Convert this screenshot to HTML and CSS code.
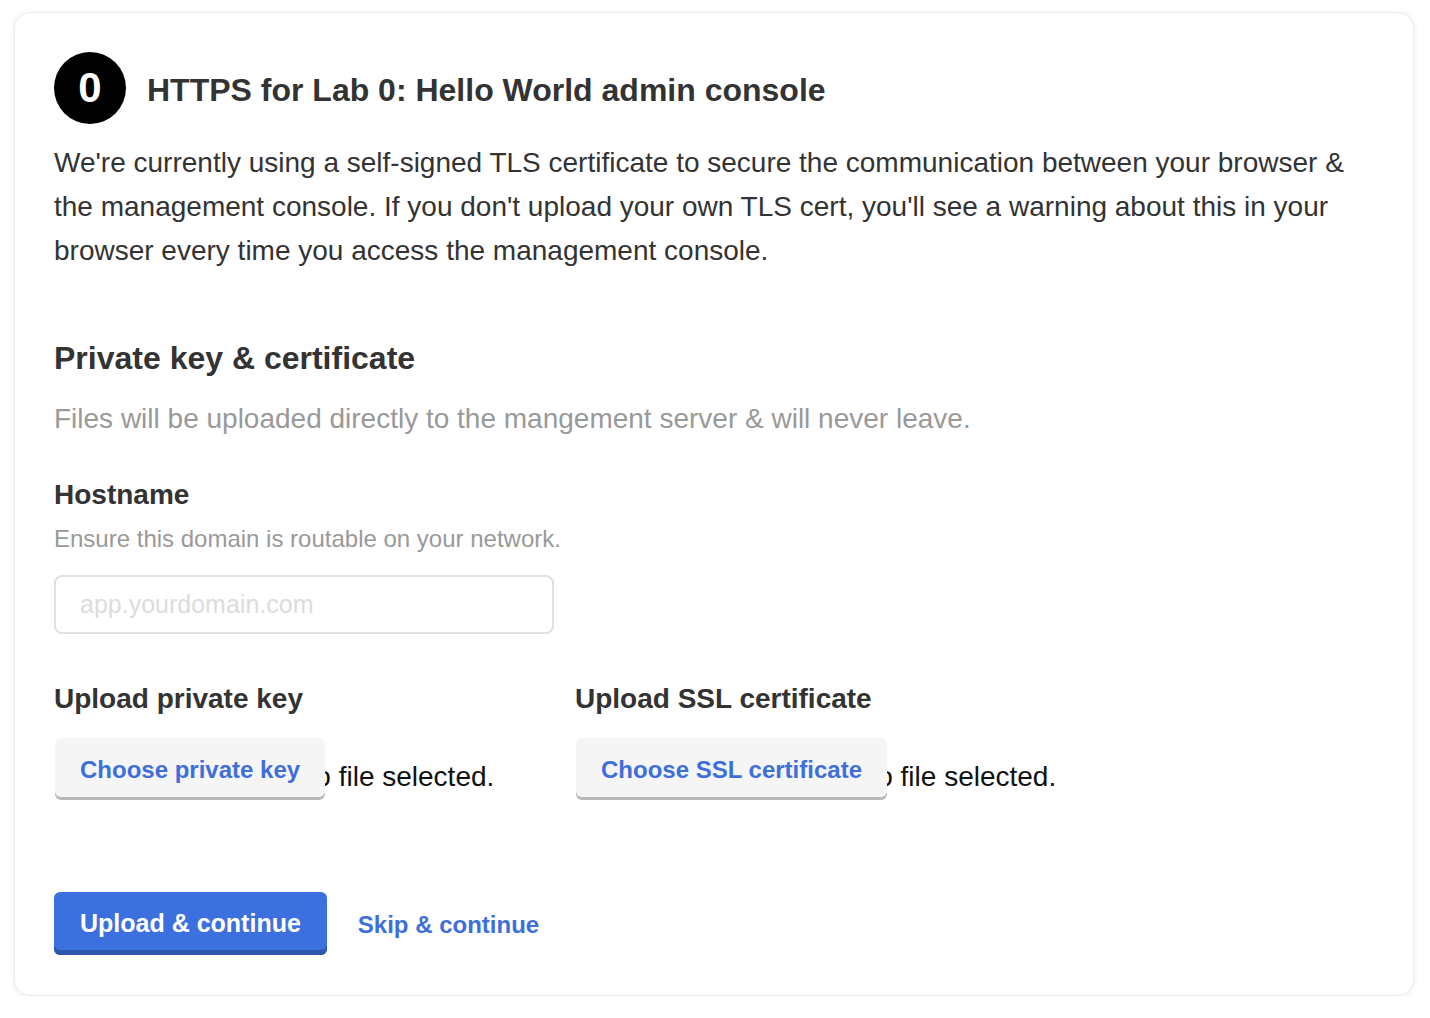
FILE: index.html
```html
<!DOCTYPE html>
<html>
<head>
<meta charset="utf-8">
<link rel="stylesheet" href="styles.css">
</head>
<body>
<div class="card">
  <div class="header">
    <div class="step">0</div>
    <h1 class="title">HTTPS for Lab 0: Hello World admin console</h1>
  </div>
  <p class="intro">We're currently using a self-signed TLS certificate to secure the communication between your browser &amp; the management console. If you don't upload your own TLS cert, you'll see a warning about this in your browser every time you access the management console.</p>

  <h2 class="section">Private key &amp; certificate</h2>
  <p class="section-note">Files will be uploaded directly to the mangement server &amp; will never leave.</p>

  <h3 class="label">Hostname</h3>
  <p class="hint">Ensure this domain is routable on your network.</p>
  <input class="text-input" type="text" placeholder="app.yourdomain.com">

  <div class="uploads">
    <div class="upload">
      <h3 class="label">Upload private key</h3>
      <div class="file">
        <span class="file-btn">Choose private key</span>
        <span class="file-status">No file selected.</span>
      </div>
    </div>
    <div class="upload">
      <h3 class="label">Upload SSL certificate</h3>
      <div class="file">
        <span class="file-btn">Choose SSL certificate</span>
        <span class="file-status">No file selected.</span>
      </div>
    </div>
  </div>

  <div class="actions">
    <button class="primary">Upload &amp; continue</button>
    <a class="skip" href="#">Skip &amp; continue</a>
  </div>
</div>
</body>
</html>
```

FILE: styles.css
```css
* { box-sizing: border-box; }
html, body { margin: 0; padding: 0; background: #fff; }
body {
  font-family: "Liberation Sans", Arial, Helvetica, sans-serif;
  color: #333;
}
.card {
  margin: 12px 0 0 14px;
  width: 1400px;
  height: 984px;
  border-radius: 16px;
  border: 1px solid #ececec;
  box-shadow: 0 1px 6px rgba(0,0,0,0.08);
  padding: 39px 40px 40px 39px;
  background: #fff;
}
.header {
  display: flex;
  align-items: center;
  gap: 21px;
}
.step {
  width: 72px;
  height: 72px;
  border-radius: 50%;
  background: #000;
  color: #fff;
  font-weight: bold;
  font-size: 42px;
  display: flex;
  align-items: center;
  justify-content: center;
  flex: none;
}
.title {
  margin: 4px 0 0;
  font-size: 32px;
  font-weight: bold;
  color: #333;
  line-height: 36px;
}
.intro {
  margin: 17px 0 0;
  font-size: 28px;
  line-height: 44px;
  color: #333;
}
.section {
  margin: 67px 0 0;
  font-size: 32px;
  line-height: 36px;
  font-weight: bold;
}
.section-note {
  margin: 21px 0 0;
  font-size: 28px;
  line-height: 44px;
  color: #999;
}
.label {
  margin: 38px 0 0;
  font-size: 28px;
  line-height: 32px;
  font-weight: bold;
}
.hint {
  margin: 14px 0 0;
  font-size: 24px;
  line-height: 28px;
  color: #999;
}
.text-input {
  display: block;
  margin-top: 22px;
  width: 500px;
  height: 59px;
  border: 2px solid #e0e0e0;
  border-radius: 8px;
  padding: 0 24px;
  font-family: inherit;
  font-size: 25px;
  color: #333;
  outline: none;
}
.text-input::placeholder { color: #dcdcdc; }
.uploads {
  display: grid;
  grid-template-columns: 521px 521px;
  margin-top: 11px;
}
.upload .label { margin-top: 38px; }
.file {
  margin-top: 23px;
  display: flex;
  align-items: center;
}
.file-btn {
  position: relative;
  z-index: 1;
  display: inline-block;
  background: #f5f5f5;
  border-radius: 6px;
  box-shadow: 0 3px 0 #b9b9b9;
  padding: 2px 25px 0;
  height: 59px;
  line-height: 59px;
  font-size: 24px;
  font-weight: bold;
  color: #3d6fdb;
  margin-left: 1px;
}
.file-status {
  margin-left: -30px;
  margin-top: 18px;
  font-size: 28px;
  color: #111;
}
.actions {
  margin-top: 95px;
  display: flex;
  align-items: center;
  gap: 31px;
}
.primary {
  height: 63px;
  padding: 0 26px 0;
  border: none;
  border-radius: 6px;
  background: #3d70df;
  box-shadow: inset 0 -5px 0 #2e56ad;
  color: #fff;
  font-family: inherit;
  font-size: 25px;
  font-weight: bold;
}
.skip {
  color: #3d6fdb;
  font-size: 24px;
  font-weight: bold;
  text-decoration: none;
  margin-top: 2px;
}
```
